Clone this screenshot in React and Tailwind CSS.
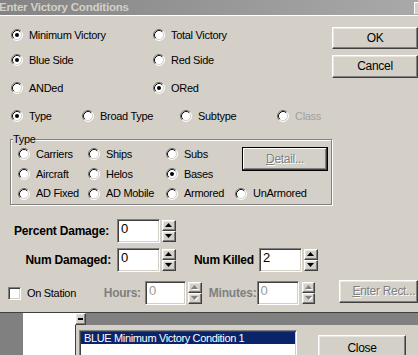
import React from "react";

const raised =
  "border border-t-white border-l-white border-r-[#404040] border-b-[#404040] shadow-[inset_-1px_-1px_0_#808080,inset_1px_1px_0_#e8e6e1]";
const sunken =
  "border border-t-[#808080] border-l-[#808080] border-r-white border-b-white shadow-[inset_1px_1px_0_#404040,inset_-1px_-1px_0_#d4d0c8]";

function Radio({ checked }) {
  return (
    <svg width="12" height="12" viewBox="0 0 12 12" className="shrink-0">
      <circle cx="6" cy="6" r="5" fill="white" />
      <path d="M2.11 9.89A5.5 5.5 0 0 1 9.89 2.11" stroke="#707070" fill="none" />
      <path d="M9.89 2.11A5.5 5.5 0 0 1 2.11 9.89" stroke="#ffffff" fill="none" />
      <path d="M2.82 9.18A4.5 4.5 0 0 1 9.18 2.82" stroke="#101010" fill="none" />
      <path d="M9.18 2.82A4.5 4.5 0 0 1 2.82 9.18" stroke="#d4d0c8" fill="none" />
      {checked && <circle cx="6" cy="6" r="2" fill="black" />}
    </svg>
  );
}

function RadioItem({ label, checked, disabled, className = "" }) {
  return (
    <div className={"flex items-center gap-[6px] " + className}>
      <Radio checked={checked} />
      <span className={disabled ? "text-[#a0a0a0]" : "text-black"}>{label}</span>
    </div>
  );
}

function Arrow({ up, disabled }) {
  const pts = up ? "3.5,0 7,4 0,4" : "0,0 7,0 3.5,4";
  return (
    <svg width="8" height="5" viewBox="0 0 8 5">
      {disabled && <polygon points={pts} fill="#ffffff" transform="translate(1,1)" />}
      <polygon points={pts} fill={disabled ? "#808080" : "#000000"} />
    </svg>
  );
}

function Spinner({ disabled, className = "" }) {
  return (
    <div className={"flex flex-col w-[14px] h-[22px] " + className}>
      <div className={"flex-1 flex items-center justify-center bg-[#d4d0c8] " + raised}>
        <Arrow up disabled={disabled} />
      </div>
      <div className={"flex-1 flex items-center justify-center bg-[#d4d0c8] " + raised}>
        <Arrow disabled={disabled} />
      </div>
    </div>
  );
}

function Field({ value, disabled, className = "" }) {
  return (
    <div
      className={
        "h-[24px] bg-white pl-[3px] pt-[1px] text-[13px] leading-[16px] " +
        (disabled ? "text-[#9a9a9a] " : "text-black ") +
        sunken +
        " " +
        className
      }
    >
      {value}
    </div>
  );
}

export default function App() {
  return (
    <div className="w-[418px] h-[355px] overflow-hidden bg-[#d4d0c8] font-['Liberation_Sans',Arial,sans-serif] text-[11px] tracking-[-0.3px] leading-[13px] select-none">
      {/* Title bar */}
      <div className="h-[15px] flex items-center bg-linear-to-r from-[#848484] to-[#a9a9a9]">
        <span className="ml-[-1px] font-bold text-[11.5px] tracking-[-0.2px] text-[#d4d0c8]">
          Enter Victory Conditions
        </span>
        <div className="ml-auto w-[4px] h-[12px] bg-[#d4d0c8] border-l border-t border-white"></div>
      </div>
      <div className="h-[1px] bg-white"></div>

      {/* Top radios + buttons */}
      <div className="flex">
        <div className="w-[335px] pl-[11px]">
          <div className="flex items-center h-[24px] mt-[7px]">
            <RadioItem className="w-[142px]" label="Minimum Victory" checked />
            <RadioItem label="Total Victory" />
          </div>
          <div className="flex items-center h-[26px]">
            <RadioItem className="w-[142px]" label="Blue Side" checked />
            <RadioItem label="Red Side" />
          </div>
          <div className="flex items-center h-[30px]">
            <RadioItem className="w-[142px]" label="ANDed" />
            <RadioItem label="ORed" checked />
          </div>
          <div className="flex items-center h-[26px]">
            <RadioItem className="w-[71px]" label="Type" checked />
            <RadioItem className="w-[98px]" label="Broad Type" />
            <RadioItem className="w-[97px]" label="Subtype" />
            <RadioItem label="Class" disabled />
          </div>
        </div>
        <div className="flex flex-col pt-[11px] gap-[6px]">
          <div className={"w-[86px] h-[22px] flex items-center justify-center text-[12px] bg-[#d4d0c8] " + raised}>
            OK
          </div>
          <div className={"w-[86px] h-[23px] flex items-center justify-center text-[12px] bg-[#d4d0c8] " + raised}>
            Cancel
          </div>
        </div>
      </div>

      {/* Type group box */}
      <div className="relative ml-[10px] mt-[10px] w-[322px] h-[66px] border border-[#808080] shadow-[inset_1px_1px_0_white,1px_1px_0_white] pl-[7px] pt-[4px]">
        <span className="absolute left-[2px] top-[-7px] bg-[#d4d0c8] leading-[12px]">Type</span>
        <div className="grid grid-cols-[70px_78px_69px_auto] grid-rows-[20px_20px_19px] items-center">
          <RadioItem label="Carriers" />
          <RadioItem label="Ships" />
          <RadioItem label="Subs" />
          <div
            className={
              "row-span-2 self-start mt-[3px] ml-[7px] w-[86px] h-[24px] flex items-center justify-center text-[12px] text-[#808080] [text-shadow:1px_1px_0_#ffffff] bg-[#d4d0c8] border border-black shadow-[inset_-1px_-1px_0_#404040,inset_1px_1px_0_#ffffff,inset_-2px_-2px_0_#808080]"
            }
          >
            <span>
              <span className="underline">D</span>etail...
            </span>
          </div>
          <RadioItem label="Aircraft" />
          <RadioItem label="Helos" />
          <RadioItem label="Bases" checked />
          <RadioItem label="AD Fixed" />
          <RadioItem label="AD Mobile" />
          <RadioItem label="Armored" />
          <RadioItem label="UnArmored" />
        </div>
      </div>

      {/* Percent Damage */}
      <div className="flex items-center h-[24px] mt-[14px]">
        <div className="w-[109px] text-right font-bold text-[12px] tracking-[-0.2px] whitespace-nowrap">
          Percent Damage:
        </div>
        <Field className="ml-[8px] w-[43px]" value="0" />
        <Spinner className="ml-[2px]" />
      </div>

      {/* Num Damaged / Num Killed */}
      <div className="flex items-center h-[24px] mt-[5px]">
        <div className="w-[111px] text-right font-bold text-[12px] tracking-[-0.2px] whitespace-nowrap">
          Num Damaged:
        </div>
        <Field className="ml-[6px] w-[43px]" value="0" />
        <Spinner className="ml-[2px]" />
        <div className="ml-[18px] w-[59px] font-bold text-[12px] tracking-[-0.3px] whitespace-nowrap">
          Num Killed
        </div>
        <Field className="ml-[6px] w-[43px]" value="2" />
        <Spinner className="ml-[2px]" />
      </div>

      {/* On Station row */}
      <div className="flex items-center h-[24px] mt-[9px]">
        <div className="w-[98px] ml-[8px] flex items-center gap-[6px]">
          <div className={"w-[13px] h-[13px] bg-white " + sunken}></div>
          <span>On Station</span>
        </div>
        <div className="w-[42px] font-bold text-[12px] text-[#808080] whitespace-nowrap">Hours:</div>
        <Field className="w-[42px]" value="0" disabled />
        <Spinner className="ml-[2px]" disabled />
        <div className="ml-[7px] w-[48px] font-bold text-[12px] text-[#808080] tracking-[-0.2px] whitespace-nowrap">
          Minutes:
        </div>
        <Field className="w-[43px]" value="0" disabled />
        <Spinner className="ml-[3px]" disabled />
        <div
          className={
            "ml-[24px] self-start mt-[-1px] w-[80px] h-[23px] flex items-center pl-[12px] text-[12px] text-[#808080] [text-shadow:1px_1px_0_#ffffff] bg-[#d4d0c8] " +
            raised
          }
        >
          <span className="whitespace-nowrap">
            <span className="underline">E</span>nter Rect...
          </span>
        </div>
      </div>

      {/* Bottom MDI area */}
      <div className="mt-[7px] h-[43px] border-t border-[#404040] flex">
        <div className="w-[23px] bg-[#808080]"></div>
        <div className="w-[52px] bg-white"></div>
        <div className="flex-1 flex flex-col">
          <div className="h-[12px] flex bg-[#808080]">
            <div className={"w-[11px] h-[12px] flex items-center justify-center bg-[#d4d0c8] " + raised}>
              <div className="w-[5px] h-[2px] bg-black"></div>
            </div>
          </div>
          <div className="flex-1 flex border-l border-[#404040] pl-[3px] pt-[5px]">
            <div className={"w-[218px] h-[30px] bg-white p-[1px] pt-[1px] " + sunken}>
              <div className="h-[12px] bg-[#0a246a] text-white text-[11px] tracking-[-0.35px] leading-[12px] pl-[3px] whitespace-nowrap">
                BLUE Minimum Victory Condition 1
              </div>
            </div>
            <div
              className={
                "ml-[21px] mt-[5px] w-[88px] h-[26px] flex items-center justify-center text-[12px] bg-[#d4d0c8] " +
                raised
              }
            >
              Close
            </div>
          </div>
        </div>
      </div>
    </div>
  );
}
